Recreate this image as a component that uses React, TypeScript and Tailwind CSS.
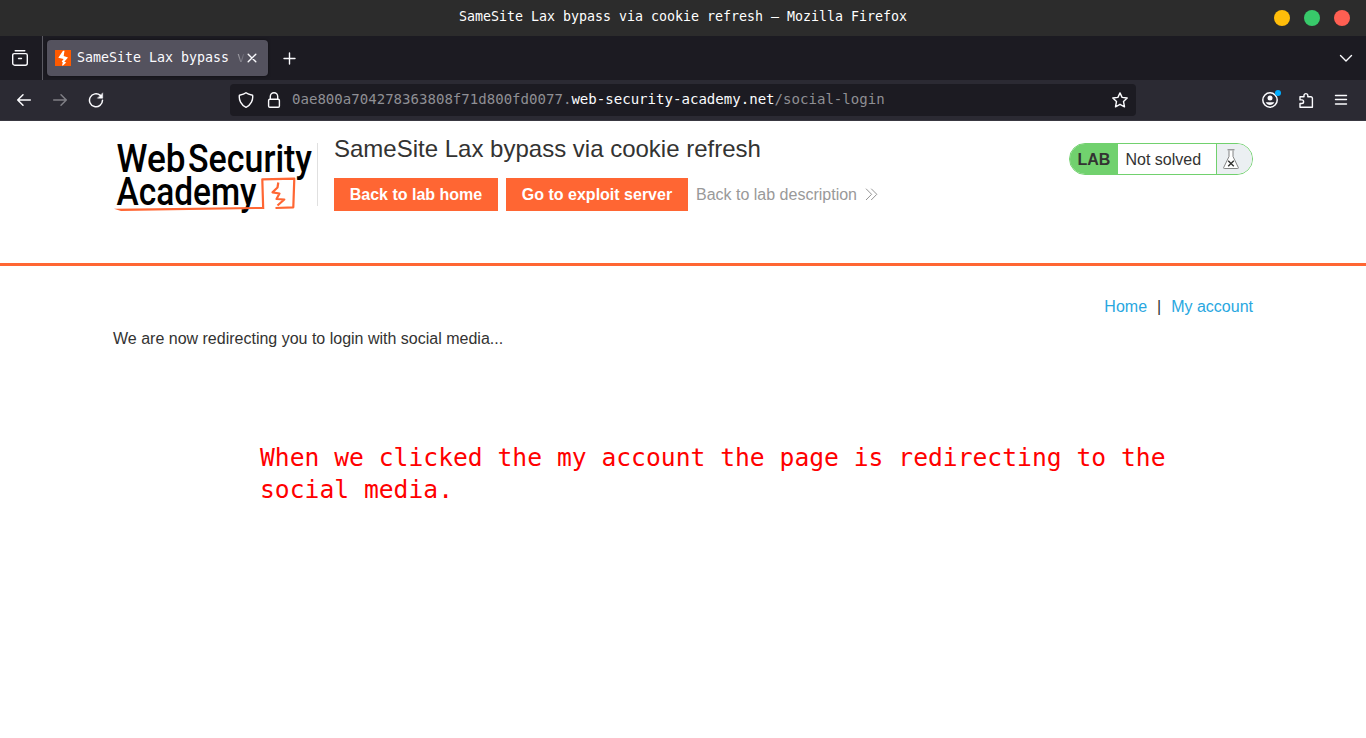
import type { ReactNode } from 'react';

const mono = "font-['DejaVu_Sans_Mono',monospace]";

function Icon({ size = 16, className = '', children }: { size?: number; className?: string; children: ReactNode }) {
  return (
    <svg
      width={size}
      height={size}
      viewBox={`0 0 ${size} ${size}`}
      fill="none"
      stroke="#fbfbfe"
      strokeWidth="1.4"
      strokeLinecap="round"
      strokeLinejoin="round"
      className={`block shrink-0 ${className}`}
    >
      {children}
    </svg>
  );
}

function TitleBar() {
  return (
    <div className="relative flex h-9 items-center justify-center bg-[#2c2c2c]">
      <span className={`${mono} whitespace-pre pb-[3px] text-[13.29px] leading-4 text-white`}>
        SameSite Lax bypass via cookie refresh – Mozilla Firefox
      </span>
      <div className="absolute right-4 top-[10px] flex gap-[14px]">
        <span className="size-4 rounded-full bg-[#ffbd0a]" />
        <span className="size-4 rounded-full bg-[#38c96a]" />
        <span className="size-4 rounded-full bg-[#ff5f52]" />
      </div>
    </div>
  );
}

function TabStrip() {
  return (
    <div className="flex h-11 items-center bg-[#1c1b22]">
      <div className="flex h-full w-[43px] items-center border-r border-[#5b5a62] pl-3">
        <Icon>
          <path d="M3.200 .8h9.600" />
          <path d="M.7 5.200a1.600 1.600 0 0 1 1.600-1.600h11.400a1.600 1.600 0 0 1 1.600 1.600v8a2 2 0 0 1-2 2H2.700a2 2 0 0 1-2-2z" />
          <path d="M6.500 8.500h3" />
        </Icon>
      </div>
      <div className="ml-1 flex h-9 w-[221px] items-center rounded bg-[#54525e] pl-2 shadow-[0_0_3px_rgba(0,0,0,0.5)]">
        <svg width="16" height="16" viewBox="0 0 16 16" className="shrink-0">
          <path fill="#ff5a00" d="M0 0h16v16H0z" />
          <path fill="#fff" d="M8 .7h1.500L8.700 6l4.300 1.500-3.700 4.300 2 .7L8 15.500H7l.8-3-1.100-1L8.600 9 3.300 7.800z" />
        </svg>
        <div className="relative ml-[6px] w-[169px]">
          <span className={`${mono} block whitespace-pre text-[13.29px] leading-[18px] text-[#fbfbfe]`}>
            SameSite Lax bypass <span className="bg-linear-to-r from-[#a9a8af] to-[#5b5965] bg-clip-text text-transparent">v</span>
          </span>
        </div>
        <Icon size={10} className="ml-[1px]">
          <path d="M1.200 1.200 8.800 8.800M8.800 1.200 1.200 8.800" />
        </Icon>
      </div>
      <Icon size={13} className="ml-[15px]">
        <path d="M6.500 1v11M1 6.500h11" />
      </Icon>
      <Icon size={14} className="ml-auto mr-[13px]">
        <path d="M1.500 4.500 7 10l5.500-5.500" />
      </Icon>
    </div>
  );
}

function NavBar() {
  return (
    <div className="flex h-[41px] items-center border-b border-[#393841] bg-[#2b2a33]">
      <Icon className="ml-4">
        <path d="M14.300 8H1.700M7 2.700 1.700 8 7 13.300" strokeWidth="1.500" />
      </Icon>
      <Icon className="ml-5 opacity-40">
        <path d="M1.700 8h12.600M9 2.700 14.300 8 9 13.300" strokeWidth="1.500" />
      </Icon>
      <Icon className="ml-5">
        <path d="M12.300 3.400A6.500 6.500 0 1 0 14.500 8.300" strokeWidth="1.500" />
        <path d="M14.700 1.200v5h-5z" fill="#fbfbfe" strokeWidth=".5" />
      </Icon>
      <div className="ml-[126px] flex h-8 w-[906px] items-center rounded bg-[#1c1b22] pl-2">
        <Icon>
          <path d="M8 .8c1.500 1.300 4 2 6.600 2.400.7 4.700-1.600 9.800-6.600 12.100C3 13 .7 7.900 1.400 3.200 4 2.800 6.500 2.100 8 .8z" />
        </Icon>
        <Icon className="ml-3">
          <path d="M4.300 7V4.400a3.700 3.700 0 0 1 7.400 0V7" />
          <rect x="2.600" y="7.200" width="10.800" height="8.100" rx="1.300" />
        </Icon>
        <span className={`${mono} ml-[10px] whitespace-pre pb-[2px] text-[14.07px] leading-5 text-[#8f8f94]`}>
          0ae800a704278363808f71d800fd0077.<span className="text-[#fbfbfe]">web-security-academy.net</span>/social-login
        </span>
        <Icon className="ml-auto mr-2">
          <path d="m8 .9 2.100 4.500 5.100.6-3.700 3.500 1 5.300L8 12.300l-4.500 2.500 1-5.300L.8 6l5.100-.6z" />
        </Icon>
      </div>
      <div className="relative ml-auto">
        <Icon>
          <circle cx="8" cy="8" r="7.200" strokeWidth="1.500" />
          <circle cx="8" cy="6.100" r="2.500" fill="#fbfbfe" stroke="none" />
          <path d="M3.700 10.300h8.600c-.9 1.800-2.400 2.700-4.300 2.700s-3.400-.9-4.300-2.700z" fill="#fbfbfe" stroke="none" />
        </Icon>
        <span className="absolute -right-[3px] -top-[2px] size-[6px] rounded-full bg-[#00adff]" />
      </div>
      <Icon className="ml-5">
        <path d="M2 4.700h4V3a2 2 0 0 1 3.800 0v1.700h3.100a1.500 1.500 0 0 1 1.500 1.500v9H2v-3.700h1.800a1.800 1.800 0 0 0 0-3.600H2z" />
      </Icon>
      <Icon size={14} className="ml-5 mr-[18px]">
        <path d="M1.500 2.500h11M1.500 6.500h11M1.500 11h11" />
      </Icon>
    </div>
  );
}

function AcademyLogo() {
  return (
    <svg width="205" height="78" viewBox="0 0 205 78" className="block shrink-0">
      <g fontFamily="Roboto, sans-serif" fontWeight="500" fontSize="38" fill="#000">
        <text x="3.500" y="36.500" textLength="69" lengthAdjust="spacingAndGlyphs">Web</text>
        <text x="75" y="36.500" textLength="124" lengthAdjust="spacingAndGlyphs">Security</text>
        <text x="3.500" y="69.500" textLength="140" lengthAdjust="spacingAndGlyphs">Academy</text>
      </g>
      <path d="M1 73.700 149.500 72v2L8 76z" fill="#ff6633" />
      <g fill="none" stroke="#ff6633" strokeWidth="2.200" strokeLinejoin="round">
        <path d="M150.200 74 149.300 44.300 181.300 43.600 180.300 72.300 162.500 73" />
        <path d="M165.300 47.500 164.500 52.500 159.500 57.300 166.500 58.500 163.500 64 171.300 64.500 164.500 70.500" />
      </g>
    </svg>
  );
}

function LabStatus() {
  return (
    <div className="mt-[22px] flex h-8 w-[184px] overflow-hidden rounded-full border border-[#71d16e] bg-white text-base leading-[30px] text-[#333332]">
      <span className="w-12 bg-[#71d16e] pl-[7.500px] pt-px font-bold">LAB</span>
      <span className="w-[98px] pl-[7.500px] pt-px">Not solved</span>
      <span className="flex-1 border-l border-[#71d16e] bg-[#ebeff2] pl-[6px] pt-[5px]">
        <svg width="16" height="20" viewBox="0 0 16 20" fill="none" className="block">
          <path d="M6 1.500v6L.7 18.500q-.3 1 .6 1h13.400q.9 0 .6-1L10 7.500v-6" fill="#fff" stroke="#777" strokeWidth=".9" />
          <path d="M4.500.8h7" stroke="#777" />
          <path d="m5.200 11.700 5.600 5.600m0-5.600-5.600 5.600" stroke="#333332" strokeWidth="1.400" />
        </svg>
      </span>
    </div>
  );
}

function LabHeader() {
  return (
    <header className="flex h-[145px] items-start border-b-[3px] border-[#ff6633] pl-[113px] pr-[113px]">
      <div className="flex w-[205px] pt-[14px]">
        <AcademyLogo />
      </div>
      <div className="-ml-px mt-[22px] h-[63px] w-px bg-[#e0e0e0]" />
      <div className="ml-4 pt-[13px]">
        <h1 className="whitespace-nowrap text-2xl leading-[30px]">SameSite Lax bypass via cookie refresh</h1>
        <div className="mt-[14px] flex h-[33px] items-center whitespace-nowrap text-base">
          <a className="h-[33px] w-[164px] bg-[#ff6633] text-center font-bold leading-[33px] text-white">Back to lab home</a>
          <a className="ml-2 h-[33px] w-[182px] bg-[#ff6633] text-center font-bold leading-[33px] text-white">Go to exploit server</a>
          <a className="ml-2 flex items-center text-[#999]">
            Back to lab description
            <svg width="13" height="13" viewBox="0 0 13 13" fill="none" stroke="#888" strokeWidth=".9" className="ml-2">
              <path d="m1 .7 5.600 5.600L1 12M6.200.7l5.600 5.600L6.200 12" />
            </svg>
          </a>
        </div>
      </div>
      <div className="ml-auto">
        <LabStatus />
      </div>
    </header>
  );
}

export default function App() {
  return (
    <div className="flex h-[738px] w-[1366px] flex-col overflow-hidden bg-white font-['Liberation_Sans',sans-serif] text-[#333332]">
      <TitleBar />
      <TabStrip />
      <NavBar />
      <LabHeader />
      <main className="px-[113px] pt-[29px] text-base leading-6">
        <nav className="flex justify-end text-[#29a7df]">
          <a>Home</a>
          <span className="mx-[10px] text-[#333332]">|</span>
          <a>My account</a>
        </nav>
        <p className="mt-2">We are now redirecting you to login with social media...</p>
        <p className={`${mono} ml-[147px] mt-[91px] whitespace-pre text-[24.66px] leading-8 text-[#ff0000]`}>
          When we clicked the my account the page is redirecting to the{'\n'}social media.
        </p>
      </main>
    </div>
  );
}
